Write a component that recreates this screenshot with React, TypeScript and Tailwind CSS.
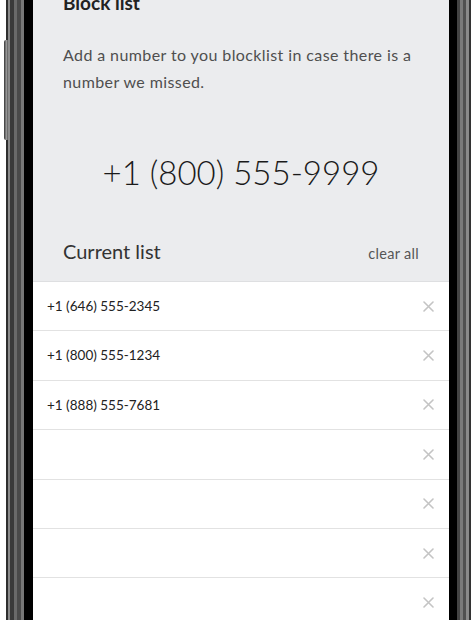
import React from "react";

const numbers = ["+1 (646) 555-2345", "+1 (800) 555-1234", "+1 (888) 555-7681", "", "", "", ""];

function CloseIcon() {
  return (
    <svg width="11" height="11" viewBox="0 0 11 11" className="text-[#c4c4c4]">
      <path d="M1 1L10 10M10 1L1 10" stroke="currentColor" strokeWidth="1.6" strokeLinecap="round" />
    </svg>
  );
}

export default function App() {
  return (
    <div className="flex h-[620px] w-[473px] overflow-hidden bg-white font-['Lato',sans-serif]">
      {/* left bezel */}
      <div className="relative h-full w-[33px] shrink-0 bg-[linear-gradient(to_right,#ffffff_0px,#ffffff_6px,#2e2e2e_6px,#2e2e2e_8px,#8a8a8a_8px,#8a8a8a_10px,#3a3a3a_10px,#3a3a3a_14px,#6a6a6a_14px,#6a6a6a_17px,#4a4a4a_17px,#4a4a4a_21px,#777777_21px,#777777_24px,#000000_24px)]">
        <div className="absolute left-[4px] top-[40px] h-[100px] w-[4px] rounded-l-[2px] bg-[linear-gradient(to_right,#333,#999_60%,#555)]" />
      </div>

      {/* screen */}
      <div className="flex h-full w-[416px] shrink-0 flex-col">
        <div className="bg-[#ebecee] px-[30px] pb-[16px]">
          <h1 className="mt-[-11px] text-[19px] font-bold leading-[28px] text-[#222]">Block list</h1>
          <p className="mt-[24px] text-[16px] leading-[27px] tracking-[0.4px] text-[#4f4f4f]">
            Add a number to you blocklist in case there is a number we missed.
          </p>
          <div className="mt-[57px] text-center text-[33px] font-light leading-[40px] text-[#1a1a1a]">
            +1 (800) 555-9999
          </div>
          <div className="mt-[45px] flex items-baseline justify-between">
            <span className="text-[20px] leading-[28px] text-[#333]">Current list</span>
            <span className="text-[14.5px] tracking-[0.3px] text-[#555]">clear all</span>
          </div>
        </div>

        <div className="border-t border-[#dedfe1]">
          {numbers.map((n, i) => (
            <div
              key={i}
              className="flex h-[49.4px] items-center justify-between border-b border-[#e2e2e2] pl-[14px] pr-[15px]"
            >
              <span className="text-[13.5px] text-[#222]">{n}</span>
              <CloseIcon />
            </div>
          ))}
        </div>
      </div>

      {/* right bezel */}
      <div className="h-full w-[24px] shrink-0 bg-[linear-gradient(to_right,#000000_0px,#000000_8px,#444444_8px,#444444_11px,#7a7a7a_11px,#7a7a7a_14px,#505050_14px,#505050_17px,#8a8a8a_17px,#8a8a8a_20px,#333333_20px,#333333_22px,#ffffff_22px)]" />
    </div>
  );
}
